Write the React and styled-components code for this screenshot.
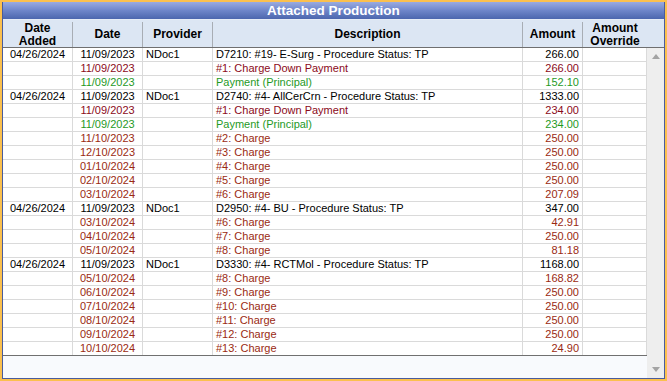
import React from 'react'
import styled, { createGlobalStyle } from 'styled-components'

const GlobalStyle = createGlobalStyle`
  html, body {
    margin: 0;
    padding: 0;
    background: #fbc04e;
  }
  * {
    box-sizing: border-box;
  }
`

const COLORS = {
  proc: '#000000',
  down: '#8b0a1a',
  charge: '#9a2a12',
  pay: '#1f9a1f'
}

const COLUMNS = '70px 70px 70px 310px 60px 64px'

const rows = [
  { kind: 'proc', added: '04/26/2024', date: '11/09/2023', provider: 'NDoc1', desc: 'D7210: #19- E-Surg - Procedure Status: TP', amount: '266.00' },
  { kind: 'down', date: '11/09/2023', desc: '#1: Charge Down Payment', amount: '266.00' },
  { kind: 'pay', date: '11/09/2023', desc: 'Payment (Principal)', amount: '152.10' },
  { kind: 'proc', added: '04/26/2024', date: '11/09/2023', provider: 'NDoc1', desc: 'D2740: #4- AllCerCrn - Procedure Status: TP', amount: '1333.00' },
  { kind: 'down', date: '11/09/2023', desc: '#1: Charge Down Payment', amount: '234.00' },
  { kind: 'pay', date: '11/09/2023', desc: 'Payment (Principal)', amount: '234.00' },
  { kind: 'charge', date: '11/10/2023', desc: '#2: Charge', amount: '250.00' },
  { kind: 'charge', date: '12/10/2023', desc: '#3: Charge', amount: '250.00' },
  { kind: 'charge', date: '01/10/2024', desc: '#4: Charge', amount: '250.00' },
  { kind: 'charge', date: '02/10/2024', desc: '#5: Charge', amount: '250.00' },
  { kind: 'charge', date: '03/10/2024', desc: '#6: Charge', amount: '207.09' },
  { kind: 'proc', added: '04/26/2024', date: '11/09/2023', provider: 'NDoc1', desc: 'D2950: #4- BU - Procedure Status: TP', amount: '347.00' },
  { kind: 'charge', date: '03/10/2024', desc: '#6: Charge', amount: '42.91' },
  { kind: 'charge', date: '04/10/2024', desc: '#7: Charge', amount: '250.00' },
  { kind: 'charge', date: '05/10/2024', desc: '#8: Charge', amount: '81.18' },
  { kind: 'proc', added: '04/26/2024', date: '11/09/2023', provider: 'NDoc1', desc: 'D3330: #4- RCTMol - Procedure Status: TP', amount: '1168.00' },
  { kind: 'charge', date: '05/10/2024', desc: '#8: Charge', amount: '168.82' },
  { kind: 'charge', date: '06/10/2024', desc: '#9: Charge', amount: '250.00' },
  { kind: 'charge', date: '07/10/2024', desc: '#10: Charge', amount: '250.00' },
  { kind: 'charge', date: '08/10/2024', desc: '#11: Charge', amount: '250.00' },
  { kind: 'charge', date: '09/10/2024', desc: '#12: Charge', amount: '250.00' },
  { kind: 'charge', date: '10/10/2024', desc: '#13: Charge', amount: '24.90' }
]

const Frame = styled.div`
  width: 667px;
  height: 381px;
  padding: 2px;
  background: #fbc04e;
`

const Panel = styled.div`
  display: flex;
  flex-direction: column;
  height: 100%;
  border: 1px solid #4a5c9c;
  border-top: none;
  background: #ffffff;
  font-family: "Liberation Sans", Arial, sans-serif;
`

const Title = styled.div`
  height: 18px;
  padding-top: 1px;
  border-bottom: 1px solid #e6ecf6;
  background: linear-gradient(to bottom, #9aabe0 0%, #7289cc 45%, #4c66ae 100%);
  color: #ffffff;
  font-weight: bold;
  font-size: 13.5px;
  line-height: 16px;
  text-align: center;
`

const Header = styled.div`
  display: grid;
  grid-template-columns: ${COLUMNS} 1fr;
  height: 28px;
  background: #dce6f3;
  border-bottom: 1px solid #6f6f6f;
`

const HeaderCell = styled.div`
  display: flex;
  align-items: center;
  justify-content: center;
  margin: 2px 0 1px;
  border-right: ${props => props.$last ? 'none' : '1px solid #a8adb4'};
  font-size: 12px;
  font-weight: bold;
  line-height: 12.5px;
  text-align: center;
  color: #000000;
`

const Body = styled.div`
  display: flex;
  flex: 1 1 auto;
  min-height: 0;
`

const Table = styled.div`
  display: flex;
  flex-direction: column;
  flex: 1 1 auto;
`

const Row = styled.div`
  display: grid;
  grid-template-columns: ${COLUMNS};
  height: 14px;
  border-bottom: 1px solid #dadada;
  color: ${props => props.$color};
  font-size: 11px;
  line-height: 13px;
  &:nth-last-child(2) {
    border-bottom: 1px solid #707070;
  }
`

const Cell = styled.div`
  padding: 0 3px;
  border-right: 1px solid #dadada;
  white-space: nowrap;
  overflow: hidden;
  text-align: ${props => props.$align || 'left'};
`

const Filler = styled.div`
  flex: 1 1 auto;
  background: #f8fafd;
`

const ScrollBar = styled.div`
  display: flex;
  flex-direction: column;
  justify-content: space-between;
  width: 17px;
  background: #eeeeee;
`

const Arrow = styled.div`
  height: 17px;
  display: flex;
  align-items: center;
  justify-content: center;
  &::before {
    content: '';
    width: 0;
    height: 0;
    border-left: 4.5px solid transparent;
    border-right: 4.5px solid transparent;
    ${props => props.$dir === 'up'
      ? 'border-bottom: 5px solid #a3a3a3;'
      : 'border-top: 5px solid #a3a3a3;'}
  }
`

function App () {
  return (
    <>
      <GlobalStyle />
      <Frame>
        <Panel>
          <Title>Attached Production</Title>
          <Header>
            <HeaderCell>Date<br />Added</HeaderCell>
            <HeaderCell>Date</HeaderCell>
            <HeaderCell>Provider</HeaderCell>
            <HeaderCell>Description</HeaderCell>
            <HeaderCell>Amount</HeaderCell>
            <HeaderCell $last>Amount<br />Override</HeaderCell>
            <HeaderCell $last />
          </Header>
          <Body>
            <Table>
              {rows.map((row, i) => (
                <Row key={i} $color={COLORS[row.kind]}>
                  <Cell $align="center">{row.added}</Cell>
                  <Cell $align="center">{row.date}</Cell>
                  <Cell>{row.provider}</Cell>
                  <Cell>{row.desc}</Cell>
                  <Cell $align="right">{row.amount}</Cell>
                  <Cell />
                </Row>
              ))}
              <Filler />
            </Table>
            <ScrollBar>
              <Arrow $dir="up" />
              <Arrow $dir="down" />
            </ScrollBar>
          </Body>
        </Panel>
      </Frame>
    </>
  )
}

export default App
